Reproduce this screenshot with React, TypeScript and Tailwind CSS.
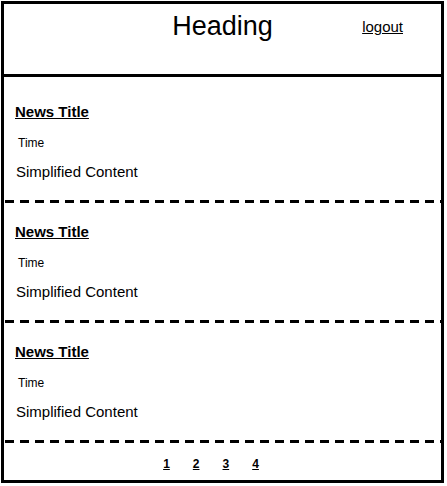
import React from "react";

const news = [
  { title: "News Title", time: "Time", content: "Simplified Content" },
  { title: "News Title", time: "Time", content: "Simplified Content" },
  { title: "News Title", time: "Time", content: "Simplified Content" },
];

function Dashed() {
  return (
    <div className="h-[3px] shrink-0 bg-[linear-gradient(to_right,#000_9px,transparent_9px)] bg-[length:15px_3px] bg-repeat-x bg-[position:1px_0]" />
  );
}

export default function App() {
  return (
    <div className="bg-white w-[447px] h-[486px] pt-px pl-px font-['Liberation_Sans',Arial,sans-serif] text-black">
      <div className="flex h-[482px] w-[443px] flex-col border-[3px] border-black">
        {/* header */}
        <header className="grid h-[70px] shrink-0 grid-cols-[1fr_auto_1fr] items-start">
          <div />
          <h1 className="pt-[6px] text-[27px] leading-[32px]">Heading</h1>
          <a
            href="#"
            className="mr-[38px] justify-self-end pt-[14px] text-[15px] leading-[18px] underline"
          >
            logout
          </a>
        </header>
        <div className="h-[3px] shrink-0 bg-black" />

        {news.map((n, i) => (
          <React.Fragment key={i}>
            <section
              className={
                "flex shrink-0 flex-col pl-[11px] " +
                (i === 0 ? "h-[123px] pt-[26px]" : "h-[117px] pt-[20px]")
              }
            >
              <a
                href="#"
                className="self-start text-[15px] font-bold leading-[18px] underline"
              >
                {n.title}
              </a>
              <div className="ml-[3px] mt-[15px] text-[12px] leading-[14px]">
                {n.time}
              </div>
              <p className="ml-px mt-[13px] text-[15px] leading-[18px]">
                {n.content}
              </p>
            </section>
            <Dashed />
          </React.Fragment>
        ))}

        {/* pagination */}
        <nav className="flex flex-1 justify-center gap-[23px] pr-[23px] pt-[14px] text-[12px] font-bold leading-[14px]">
          {[1, 2, 3, 4].map((p) => (
            <a key={p} href="#" className="underline">
              {p}
            </a>
          ))}
        </nav>
      </div>
    </div>
  );
}
